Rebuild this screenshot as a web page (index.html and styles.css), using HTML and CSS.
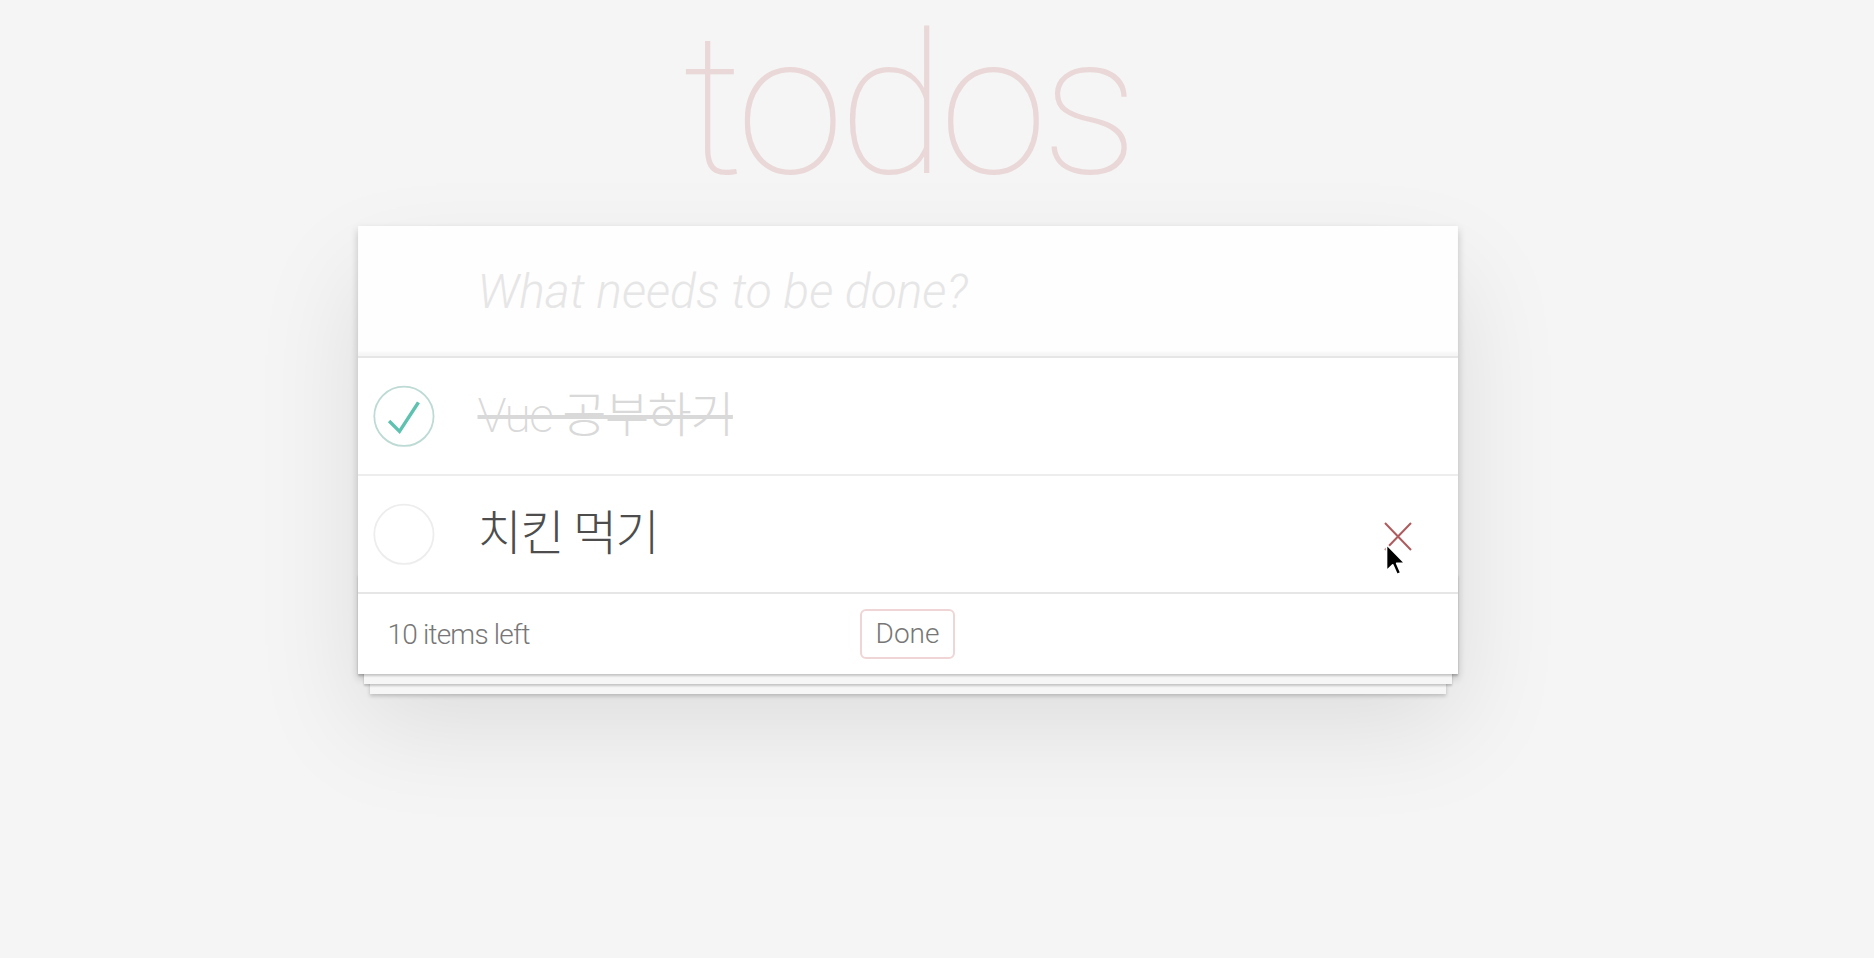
FILE: index.html
```html
<!DOCTYPE html>
<html lang="ko">
<head>
<meta charset="utf-8">
<title>Vue Todo</title>
<link rel="stylesheet" href="styles.css">
</head>
<body>
<div class="page">
  <h1 class="title">todos</h1>
  <section class="todoapp">
    <header class="new-todo">
      <span class="placeholder">What needs to be done?</span>
    </header>
    <ul class="todo-list">
      <li class="todo completed">
        <svg class="toggle" width="80" height="80" viewBox="-10 -18 100 135" aria-hidden="true">
          <circle cx="50" cy="50" r="50" fill="none" stroke="#bddad5" stroke-width="3"/>
          <path fill="#5dc2af" d="M72 25L42 71 27 56l-4 4 20 20 34-52z"/>
        </svg>
        <span class="label">Vue 공부하기</span>
      </li>
      <li class="todo">
        <svg class="toggle" width="80" height="80" viewBox="-10 -18 100 135" aria-hidden="true">
          <circle cx="50" cy="50" r="50" fill="none" stroke="#ededed" stroke-width="3"/>
        </svg>
        <span class="label">치킨 먹기</span>
        <span class="destroy" aria-label="delete">
          <svg width="80" height="80" viewBox="0 0 80 80" aria-hidden="true">
            <path d="M27 29L53 56M53 29L27 56" stroke="#af5b5e" stroke-width="2" fill="none"/>
          </svg>
        </span>
        <svg class="cursor" width="21" height="33" viewBox="0 0 12 19" aria-hidden="true">
          <path d="M0.8 0.8 L0.8 16 L4.4 12.6 L6.9 18.2 L9.1 17.2 L6.7 11.7 L11.5 11.7 Z" fill="#000" stroke="#fff" stroke-width="1" stroke-linejoin="round"/>
        </svg>
      </li>
    </ul>
    <footer class="footer">
      <span class="count">10 items left</span>
      <span class="filter">Done</span>
      <span class="spacer"></span>
    </footer>
  </section>
</div>
</body>
</html>
```

FILE: styles.css
```css
* {
  box-sizing: border-box;
  margin: 0;
  padding: 0;
}

html, body {
  height: 100%;
}

body {
  background: #f5f5f5;
  font-family: Roboto, "Noto Sans CJK KR", sans-serif;
  font-weight: 300;
  color: #4d4d4d;
  overflow: hidden;
}

.page {
  width: 1815px;
  display: flex;
  flex-direction: column;
  align-items: center;
}

.title {
  font-size: 196px;
  font-weight: 100;
  line-height: 196px;
  height: 218px;
  margin-top: 8px;
  color: rgba(175, 47, 47, 0.15);
  text-align: center;
  letter-spacing: -6px;
}

.todoapp {
  position: relative;
  width: 1100px;
  background: #fff;
  box-shadow: 0 4px 8px 0 rgba(0, 0, 0, 0.2), 0 50px 100px 0 rgba(0, 0, 0, 0.1);
}

.new-todo {
  height: 130px;
  padding-left: 120px;
  display: flex;
  align-items: center;
  background: rgba(0, 0, 0, 0.003);
  box-shadow: inset 0 -4px 2px rgba(0, 0, 0, 0.03);
}

.placeholder {
  font-size: 48px;
  font-style: italic;
  font-weight: 300;
  color: #e6e6e6;
}

.todo-list {
  list-style: none;
  border-top: 2px solid #e6e6e6;
}

.todo {
  position: relative;
  height: 118px;
  display: flex;
  align-items: center;
  border-bottom: 2px solid #ededed;
}

.todo:last-child {
  height: 116px;
  border-bottom: none;
}

.toggle {
  flex: none;
}

.label {
  flex: 1;
  margin-left: 40px;
  font-size: 48px;
  font-weight: 200;
  line-height: 58px;
  letter-spacing: -1.5px;
  color: #4d4d4d;
}

.completed .label {
  color: #d9d9d9;
  text-decoration: line-through;
  text-decoration-thickness: 4px;
}

.destroy {
  flex: none;
  width: 80px;
  height: 80px;
  margin-right: 20px;
  display: flex;
}

.cursor {
  position: absolute;
  left: 1027px;
  top: 67px;
}

.footer {
  position: relative;
  height: 82px;
  padding: 0 30px;
  border-top: 2px solid #e6e6e6;
  display: grid;
  grid-template-columns: 1fr auto 1fr;
  align-items: center;
  color: #777;
  font-size: 28px;
}

.footer::before {
  content: "";
  position: absolute;
  left: 0;
  right: 0;
  bottom: 0;
  height: 100px;
  box-shadow: 0 2px 2px rgba(0, 0, 0, 0.2),
              0 16px 0 -6px #f6f6f6,
              0 18px 2px -6px rgba(0, 0, 0, 0.2),
              0 32px 0 -12px #f6f6f6,
              0 34px 4px -12px rgba(0, 0, 0, 0.2);
  pointer-events: none;
}

.count {
  justify-self: start;
  letter-spacing: -0.8px;
}

.filter {
  position: relative;
  height: 50px;
  padding: 0 14px;
  border: 2px solid rgba(175, 47, 47, 0.2);
  border-radius: 6px;
  line-height: 46px;
  color: #777;
}
```
